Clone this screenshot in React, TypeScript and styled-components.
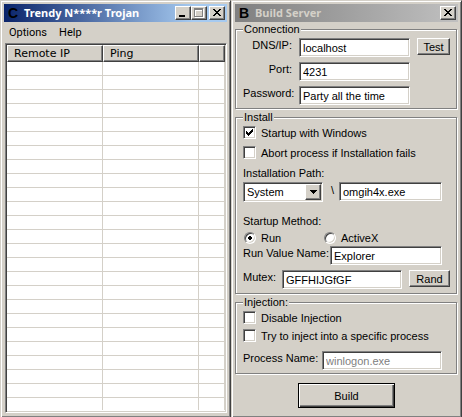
import React, { useState } from "react";
import styled, { createGlobalStyle, css } from "styled-components";

const face = "#d4d0c8";
const shade = "#808080";
const dark = "#404040";
const sans = `"Liberation Sans", Arial, sans-serif`;
const ui = `"Noto Sans", "Open Sans", sans-serif`;

const GlobalStyle = createGlobalStyle`
  * { box-sizing: border-box; }
  body { margin: 0; background: ${face}; color: #000; font: 11px/14px ${sans}; }
  button, input, select { font: inherit; color: inherit; margin: 0; }
`;

const raised = css`
  background: ${face};
  border: 1px solid;
  border-color: #fff ${dark} ${dark} #fff;
  box-shadow: inset -1px -1px 0 ${shade};
`;

const sunken = css`
  background: #fff;
  border: 1px solid;
  border-color: ${shade} #fff #fff ${shade};
  box-shadow: inset 1px 1px 0 ${dark}, inset -1px -1px 0 ${face};
`;

const Desktop = styled.main`
  display: grid;
  grid-template-columns: 1fr 1fr;
  min-height: 100vh;
`;

const Window = styled.section`
  display: flex;
  flex-direction: column;
  min-width: 0;
  padding: 3px;
  background: ${face};
  border: 1px solid;
  border-color: ${face} ${dark} ${dark} ${face};
  box-shadow: inset 1px 1px 0 #fff, inset -1px -1px 0 ${shade};
`;

const TitleBar = styled.header<{ $active?: boolean }>`
  display: flex;
  align-items: center;
  height: 18px;
  flex: none;
  padding: 0 2px 0 4px;
  color: ${(p) => (p.$active ? "#fff" : face)};
  background: ${(p) =>
    p.$active
      ? "linear-gradient(90deg, #0a246a, #a6caf0 85%)"
      : "linear-gradient(90deg, #808080, #c0c0c0)"};
`;

const Glyph = styled.span`
  width: 16px;
  color: #000;
  font: bold 14px/18px ${sans};
`;

const Title = styled.h1`
  flex: 1;
  margin: 0;
  font: bold 11px/18px ${ui};
  white-space: nowrap;
`;

const CaptionButton = styled.button<{ $gap?: boolean }>`
  ${raised}
  width: 16px;
  height: 14px;
  padding: 0;
  margin-left: ${(p) => (p.$gap ? "2px" : "0")};
  svg { display: block; }
`;

const MenuBar = styled.nav`
  display: flex;
  height: 21px;
  flex: none;
  padding-left: 5px;
  gap: 12px;
`;

const MenuItem = styled.button`
  padding: 0;
  border: 0;
  background: none;
  font: 11px/20px Roboto, sans-serif;
`;

const ListView = styled.div`
  ${sunken}
  flex: 1;
  margin: 0 0 1px 1px;
  padding: 1px;
  overflow: hidden;
`;

const Table = styled.table`
  width: 100%;
  table-layout: fixed;
  border-collapse: separate;
  border-spacing: 0;
`;

const HeadCell = styled.th<{ $width?: string }>`
  ${raised}
  width: ${(p) => p.$width ?? "auto"};
  height: 17px;
  padding: 0 6px;
  text-align: left;
  font: 11px/15px "DejaVu Sans", sans-serif;
`;

const Cell = styled.td`
  padding: 0;
  border: solid ${face};
  border-width: 0 1px 1px 0;
`;

const Row = styled.tr`
  height: 14px;
  &:last-child { height: 12px; }
  &:last-child ${Cell} { border-bottom: 0; }
`;

const Group = styled.fieldset<{ $bottom: number }>`
  min-width: 0;
  margin: 0 1px 1px 0;
  padding: 2px 6px ${(p) => p.$bottom}px 7px;
  border: 1px solid ${shade};
  box-shadow: 1px 1px 0 #fff, inset 1px 1px 0 #fff;
`;

const Legend = styled.legend`
  padding: 0 1px;
  background: ${face};
`;

const Form = styled.form`
  display: flex;
  flex-direction: column;
`;

const ConnectionGrid = styled.div`
  display: grid;
  grid-template-columns: 49px 1fr 33px;
  column-gap: 7px;
  row-gap: 5px;
  align-items: start;
`;

const Label = styled.label<{ $end?: boolean; $width?: number }>`
  flex: none;
  width: ${(p) => (p.$width ? `${p.$width}px` : "auto")};
  white-space: nowrap;
  text-align: ${(p) => (p.$end ? "right" : "left")};
`;

const TextBox = styled.input`
  ${sunken}
  flex: 1;
  width: 100%;
  min-width: 0;
  height: 19px;
  padding: 0 3px;
  border-radius: 0;
  outline: 0;
  &:disabled { color: ${shade}; }
`;

const PushButton = styled.button<{ $width: number }>`
  ${raised}
  flex: none;
  width: ${(p) => p.$width}px;
  height: 17px;
  padding: 0;
  line-height: 14px;
`;

const Line = styled.div<{ $top?: number; $inset?: boolean }>`
  display: flex;
  align-items: flex-start;
  margin-top: ${(p) => p.$top ?? 0}px;
  padding-right: ${(p) => (p.$inset ? "8px" : "0")};
  ${PushButton} { margin-left: 7px; }
`;

const Caption = styled.div<{ $top: number }>`
  margin-top: ${(p) => p.$top}px;
`;

const Option = styled.label<{ $top?: number }>`
  display: flex;
  align-items: center;
  gap: 5px;
  height: 13px;
  margin-top: ${(p) => p.$top ?? 0}px;
  white-space: nowrap;
`;

const Check = styled.input.attrs({ type: "checkbox" })`
  ${sunken}
  appearance: none;
  width: 13px;
  height: 13px;
  &:checked {
    background: #fff
      url("data:image/svg+xml,%3Csvg xmlns='http://www.w3.org/2000/svg' viewBox='0 0 7 7' shape-rendering='crispEdges'%3E%3Cpath d='M0 2h1v1h1v1h1v-1h1v-1h1v-1h1v-1h1v3h-1v1h-1v1h-1v1h-1v1h-1v-1h-1v-1h-1z'/%3E%3C/svg%3E")
      center / 7px 7px no-repeat;
  }
`;

const Radio = styled.input.attrs({ type: "radio" })`
  appearance: none;
  width: 12px;
  height: 12px;
  border: 1px solid;
  border-color: ${shade} #fff #fff ${shade};
  border-radius: 50%;
  background: #fff;
  box-shadow: inset 1px 1px 0 ${dark}, inset -1px -1px 0 ${face};
  &:checked { background: radial-gradient(circle, #000 0 2px, #fff 2px); }
`;

const Methods = styled.div`
  display: grid;
  grid-template-columns: 80px 1fr;
  margin: 3px 0 0 1px;
`;

const SelectFrame = styled.div`
  ${sunken}
  display: grid;
  width: 80px;
  height: 20px;
  padding: 1px;
  flex: none;
  > * { grid-area: 1 / 1; }
`;

const Select = styled.select`
  appearance: none;
  width: 100%;
  padding: 0 18px 0 2px;
  border: 0;
  background: transparent;
  outline: 0;
`;

const Arrow = styled.span`
  ${raised}
  display: grid;
  place-items: center;
  justify-self: end;
  width: 16px;
  height: 16px;
  pointer-events: none;
`;

const Slash = styled.span`
  width: 16px;
  padding-left: 8px;
  line-height: 16px;
`;

const BuildButton = styled.button`
  width: 97px;
  height: 25px;
  margin: 8px auto 6px 63px;
  padding: 0;
  border: 1px solid #000;
  background: ${face};
  box-shadow: inset 1px 1px 0 #fff, inset -1px -1px 0 ${dark}, inset -2px -2px 0 ${shade};
`;

const CloseIcon = () => (
  <svg width="14" height="12" viewBox="0 0 14 12" shapeRendering="crispEdges" aria-hidden="true">
    <path d="M3 2h2v1h1v1h2v-1h1v-1h2v1h-1v1h-1v1h-1v1h1v1h1v1h1v1h-2v-1h-1v-1h-2v1h-1v1h-2v-1h1v-1h1v-1h1v-1h-1v-1h-1v-1h-1z" />
  </svg>
);

const MinimizeIcon = () => (
  <svg width="14" height="12" viewBox="0 0 14 12" aria-hidden="true">
    <path d="M3 8h6v2H3z" />
  </svg>
);

const MaximizeIcon = () => (
  <svg width="14" height="12" viewBox="0 0 14 12" shapeRendering="crispEdges" fillRule="evenodd" aria-hidden="true">
    <path d="M3 2h9v9H3zM4 4v6h7V4z" fill="#fff" />
    <path d="M2 1h9v9H2zM3 3v6h7V3z" fill={shade} />
  </svg>
);

const rows = Array.from({ length: 25 }, (_, i) => i);

function ClientWindow() {
  return (
    <Window>
      <TitleBar $active>
        <Glyph aria-hidden="true">C</Glyph>
        <Title>Trendy N****r Trojan</Title>
        <CaptionButton aria-label="Minimize"><MinimizeIcon /></CaptionButton>
        <CaptionButton aria-label="Maximize" disabled><MaximizeIcon /></CaptionButton>
        <CaptionButton aria-label="Close" $gap><CloseIcon /></CaptionButton>
      </TitleBar>
      <MenuBar>
        <MenuItem>Options</MenuItem>
        <MenuItem>Help</MenuItem>
      </MenuBar>
      <ListView>
        <Table>
          <thead>
            <tr>
              <HeadCell $width="96px">Remote IP</HeadCell>
              <HeadCell $width="96px">Ping</HeadCell>
              <HeadCell />
            </tr>
          </thead>
          <tbody>
            {rows.map((i) => (
              <Row key={i}>
                <Cell /><Cell /><Cell />
              </Row>
            ))}
          </tbody>
        </Table>
      </ListView>
    </Window>
  );
}

function BuildWindow() {
  const [startup, setStartup] = useState(true);
  const [method, setMethod] = useState("run");
  return (
    <Window>
      <TitleBar>
        <Glyph aria-hidden="true">B</Glyph>
        <Title>Build Server</Title>
        <CaptionButton aria-label="Close"><CloseIcon /></CaptionButton>
      </TitleBar>
      <Form onSubmit={(e) => e.preventDefault()}>
        <Group $bottom={3}>
          <Legend>Connection</Legend>
          <ConnectionGrid>
            <Label $end htmlFor="dns">DNS/IP:</Label>
            <TextBox id="dns" defaultValue="localhost" />
            <PushButton type="button" $width={33}>Test</PushButton>
            <Label $end htmlFor="port">Port:</Label>
            <TextBox id="port" defaultValue="4231" />
            <span />
            <Label $end htmlFor="password">Password:</Label>
            <TextBox id="password" defaultValue="Party all the time" />
          </ConnectionGrid>
        </Group>
        <Group $bottom={4}>
          <Legend>Install</Legend>
          <Option>
            <Check checked={startup} onChange={(e) => setStartup(e.target.checked)} />
            Startup with Windows
          </Option>
          <Option $top={7}><Check />Abort process if Installation fails</Option>
          <Caption $top={7}><Label htmlFor="path">Installation Path:</Label></Caption>
          <Line $top={2} $inset>
            <SelectFrame>
              <Select id="path"><option>System</option></Select>
              <Arrow>
                <svg width="7" height="4" viewBox="0 0 7 4" shapeRendering="crispEdges" aria-hidden="true">
                  <path d="M0 0h7v1h-1v1h-1v1h-1v1h-1v-1h-1v-1h-1v-1h-1z" />
                </svg>
              </Arrow>
            </SelectFrame>
            <Slash>\</Slash>
            <TextBox aria-label="File name" defaultValue="omgih4x.exe" />
          </Line>
          <Caption $top={12}>Startup Method:</Caption>
          <Methods role="radiogroup" aria-label="Startup Method">
            <Option><Radio name="method" checked={method === "run"} onChange={() => setMethod("run")} />Run</Option>
            <Option><Radio name="method" checked={method === "activex"} onChange={() => setMethod("activex")} />ActiveX</Option>
          </Methods>
          <Line $top={2} $inset>
            <Label $width={87} htmlFor="value">Run Value Name:</Label>
            <TextBox id="value" defaultValue="Explorer" />
          </Line>
          <Line $top={5}>
            <Label $width={39} htmlFor="mutex">Mutex:</Label>
            <TextBox id="mutex" defaultValue="GFFHIJGfGF" />
            <PushButton type="button" $width={41}>Rand</PushButton>
          </Line>
        </Group>
        <Group $bottom={3}>
          <Legend>Injection:</Legend>
          <Option><Check />Disable Injection</Option>
          <Option $top={5}><Check />Try to inject into a specific process</Option>
          <Line $top={9} $inset>
            <Label $width={79} htmlFor="process">Process Name:</Label>
            <TextBox id="process" defaultValue="winlogon.exe" disabled />
          </Line>
        </Group>
        <BuildButton>Build</BuildButton>
      </Form>
    </Window>
  );
}

export default function App() {
  return (
    <>
      <GlobalStyle />
      <Desktop>
        <ClientWindow />
        <BuildWindow />
      </Desktop>
    </>
  );
}
